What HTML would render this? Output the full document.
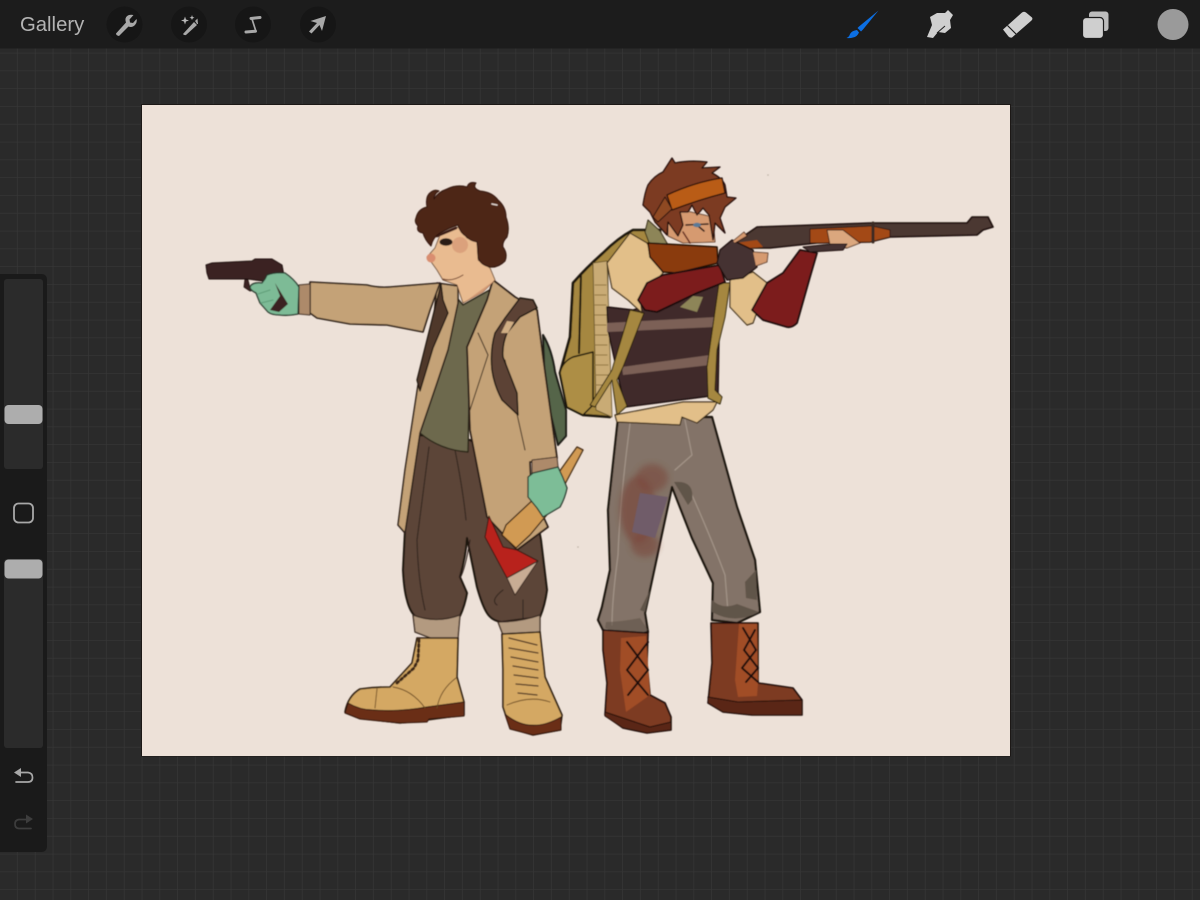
<!DOCTYPE html>
<html><head><meta charset="utf-8"><style>
html,body{margin:0;padding:0;background:#2a2a2a}
#s{position:relative;width:1200px;height:900px;overflow:hidden;font-family:"Liberation Sans",sans-serif}
svg{position:absolute;left:0;top:0}
#g{position:absolute;left:20px;top:13px;font-size:20.300px;line-height:24px;color:#b4b4b4}
</style></head><body><div id="s">
<svg width="1200" height="900" viewBox="0 0 1200 900" xmlns="http://www.w3.org/2000/svg">
<defs>
<pattern id="gr" x="0" y="0" width="17.8" height="17.8" patternUnits="userSpaceOnUse"><path d="M17.8 0V17.8M0 17.8H17.8" stroke="#373737" stroke-width="1.3" fill="none"/></pattern>
<filter id="soft" x="-5%" y="-5%" width="110%" height="110%"><feGaussianBlur stdDeviation="0.5"/></filter>
<filter id="bl" x="-50%" y="-50%" width="200%" height="200%"><feGaussianBlur stdDeviation="3"/></filter>
</defs>
<rect width="1200" height="900" fill="#2a2a2a"/>
<rect width="1200" height="900" fill="url(#gr)"/>
<rect x="141" y="104" width="870" height="652.5" fill="#1c1816"/>
<rect x="142" y="105" width="868" height="651" fill="#ede1d8"/>

<g filter="url(#soft)" stroke-linejoin="round" stroke-linecap="round">
<!-- LEFT CHARACTER -->
<path d="M543 335Q552 350 555 372L566 410L566 436L558 445L545 390Z" fill="#54654a" stroke="#1d1a16" stroke-width="2"/>
<!-- pants -->
<path d="M418 435Q410 480 405 530L403 570Q404 590 407 600Q410 612 416 617Q437 624 460 616Q465 605 467 593L460 577Q466 555 467 538L477 587Q482 605 487 613Q492 621 502 622L540 617Q545 605 547 590L541 540L530 480L470 440Z" fill="#5c4539" stroke="#1f1410" stroke-width="2"/>
<path d="M429 447Q422 500 417 540Q418 580 425 610M455 450Q463 490 466 520M470 540Q465 570 460 578M503 590Q490 600 497 605M523 600V618" fill="none" stroke="#2e211b" stroke-width="1"/>
<path d="M413 615Q436 624 460 615L458 638L433 639L415 632Z" fill="#b39a80" stroke="#3a2a20" stroke-width="1.3"/>
<path d="M498 622Q520 622 540 615L540 632L503 635Z" fill="#b39a80" stroke="#3a2a20" stroke-width="1.3"/>
<!-- left boot -->
<path d="M417 638L458 638L457 677L464 702L464 715L427 720L400 723L360 718L345 712Q348 696 360 689Q375 687 390 687L412 663Z" fill="#d4a864" stroke="#2a1a10" stroke-width="1.6"/>
<path d="M348 703Q360 710 373 710Q400 712 427 707L464 702L464 716L429 719L427 722L400 723L360 719L345 713Z" fill="#6a2d12" stroke="#2a1208" stroke-width="1"/>
<path d="M377 689L375 708M393 687Q412 690 425 708M437 708Q440 690 456 678" fill="none" stroke="#6b4a22" stroke-width=".9"/>
<path d="M397 683L414 668L418 660L419 640" fill="none" stroke="#3d2617" stroke-width="3" stroke-dasharray="2 3"/>
<!-- right boot -->
<path d="M502 634L540 632L545 677L562 715L560 730L533 735L510 728L503 707L503 670Z" fill="#d4a864" stroke="#2a1a10" stroke-width="1.6"/>
<path d="M505 714Q530 735 561 717L561 730L533 735L510 729Z" fill="#6a2d12" stroke="#2a1208" stroke-width="1"/>
<path d="M509 638L537 645M509 648L538 653M511 657L538 662M513 666L538 670M514 675L538 678M516 684L538 686M518 693L537 695" stroke="#4a3020" stroke-width="1.3" fill="none"/>
<path d="M507 705Q530 695 550 702" fill="none" stroke="#6b4a22" stroke-width=".9"/>
<!-- shirt -->
<path d="M457 298L463 305L495 287L470 345L468 452Q440 450 420 433L437 383L448 350Z" fill="#6d694e" stroke="#2b2519" stroke-width="1.4"/>
<!-- jacket left -->
<path d="M437 283L458 286L458 303L448 350L437 383L420 433L405 533L398 525L405 470L418 385L432 340Z" fill="#c4a277" stroke="#2b1f16" stroke-width="1.5"/>
<path d="M441 284L417 380L420 391L433 348L448 313L443 300Z" fill="#4f382c" stroke="#1f1510" stroke-width="1.3"/>
<!-- jacket right -->
<path d="M493 280L515 297L537 310L543 357L557 458L530 462L531 490L548 527L517 550L502 533L487 517L470 430L467 347L487 300Z" fill="#c4a277" stroke="#2b1f16" stroke-width="1.8"/>
<path d="M478 333L488 355L470 410M505 360L525 450" fill="none" stroke="#3a2a1c" stroke-width="1"/>
<!-- strap -->
<path d="M505 318L520 298L533 300L537 308L520 317L507 333Q502 345 503 357L517 393L518 415L502 400Q494 385 492 370Q490 350 495 333Z" fill="#5b4236" stroke="#1f1510" stroke-width="1.4"/>
<path d="M501 333L507 321L514 322L508 333Z" fill="#d0ae84"/>
<!-- sleeve -->
<path d="M310 282L367 285Q378 288 390 287L440 283L430 310L423 332L387 325L350 324L317 318L310 313Z" fill="#c4a277" stroke="#2b1f16" stroke-width="1.6"/>
<path d="M299 285L310 284L310 315L299 314Z" fill="#ad8a6b" stroke="#3a2a20" stroke-width="1"/>
<!-- gun -->
<path d="M206 265L212 263L252 261L255 259L272 259L282 265L284 276L270 282L248 279L209 279L207 273Z" fill="#3a2320" stroke="#1b100d" stroke-width="1"/>
<path d="M245 279L244 287L250 291L262 289L262 284L250 288L248 280Z" fill="#3a2320" stroke="#1b100d" stroke-width=".8"/>
<!-- hand -->
<path d="M267 275Q275 272 285 273Q294 279 299 287L298 314Q288 316 280 315Q272 315 268 312L260 303L256 293Q250 290 250 287Q252 282 262 283Q264 280 265 279Z" fill="#7dbb96" stroke="#27342a" stroke-width="1.3"/>
<path d="M275 283L288 304L279 312L270 310L280 296Z" fill="#3a2320"/>
<path d="M258 294L270 290M261 303L273 300" stroke="#5f9c78" stroke-width="1" fill="none"/>
<!-- face -->
<path d="M440 235L458 227L467 238L477 242L478 260L490 268L495 280L483 292L463 303L457 285L443 280L437 270L432 263L427 257L435 248Z" fill="#e9bb90" stroke="#5a3a25" stroke-width=".8"/>
<ellipse cx="460" cy="245" rx="8" ry="8" fill="#cf8d6b" opacity=".55"/>
<ellipse cx="431" cy="258" rx="4.500" ry="4.500" fill="#d98d6f"/>
<ellipse cx="446" cy="242" rx="6.500" ry="3.800" fill="#2c1a14"/>
<path d="M437 236L456 228" stroke="#3d1f14" stroke-width="2.6" fill="none"/>
<path d="M443 279Q452 282 463 275" fill="none" stroke="#6d3f2a" stroke-width="1"/>
<path d="M463 303L495 280L483 292Z" fill="#d39a74"/>
<path d="M478 262L470 258Q474 248 476 243Z" fill="#e9bb90"/>
<!-- hair -->
<path d="M416 218Q418 209 427 207Q425 196 431 192Q435 189 439 191Q434 194 434 199Q438 192 447 189Q457 184 467 187Q469 181 476 183Q472 188 480 191Q492 192 498 200Q506 207 506 217Q510 228 507 237Q502 242 503 247Q508 254 505 261Q498 268 490 267Q480 265 478 257Q478 248 477 242Q470 241 467 237Q460 233 458 225Q449 228 440 233Q433 237 431 246Q425 240 423 233Q416 232 418 226Q414 222 416 218Z" fill="#4d2518" stroke="#2d1209" stroke-width="1"/>
<path d="M492 204L497 205" stroke="#eee2da" stroke-width="1.400"/>
<!-- hand 2 + axe -->
<path d="M583 450L577 447L552 482L506 525L502 535L516 548L530 535L555 505L566 482Z" fill="#d19a52" stroke="#3a2410" stroke-width="1.300"/>
<path d="M489 516L503 547L517 550L538 561L507 578L485 537Z" fill="#b8241f" stroke="#3b1510" stroke-width="1"/>
<path d="M538 561L507 578L515 595Z" fill="#c8ac94" stroke="#3b2a20" stroke-width="1"/>
<path d="M532 460L557 457L558 467L532 475Z" fill="#ad8a6b" stroke="#3a2a20" stroke-width="1"/>
<path d="M528 477L533 473L558 467Q563 477 567 488Q565 498 560 507L543 517L537 508L528 497Z" fill="#7dbd97" stroke="#27342a" stroke-width="1.300"/>

<!-- RIGHT CHARACTER -->
<path d="M570 337L573 283Q586 268 603 253Q618 238 633 230L660 230L660 243L607 263L607 317L610 417L583 415L567 407L560 373Z" fill="#a5873f" stroke="#1a1408" stroke-width="2.600"/>
<path d="M560 373Q562 362 573 357L593 352L593 405L583 415L567 407Z" fill="#ad8e44" stroke="#1a1408" stroke-width="1.500"/>
<path d="M593 263L607 261L612 417L596 410Z" fill="#c9ab74" stroke="#5c4a22" stroke-width=".8"/>
<path d="M595 285H606M595 295H606M595 305H606M595 315H606M595 325H606M595 335H607M595 345H607M595 355H607M595 365H608M595 375H608M595 385H608" stroke="#8f7440" stroke-width="1"/>
<path d="M581 275L579 353" stroke="#1a1408" stroke-width="2" fill="none"/>
<!-- pants -->
<path d="M618 418L608 510L610 570L602 607L598 620L603 630L627 637L648 632L645 613L657 557L672 487L692 538L713 583L712 620L737 623L760 612L755 560L737 507L712 417Z" fill="#837367" stroke="#1a1410" stroke-width="2.200"/>
<path d="M630 424Q620 500 618 555Q612 600 612 625M692 495Q712 540 725 575L728 612M685 420L692 455L675 470" fill="none" stroke="#a39488" stroke-width="1.200"/>
<path d="M674 482Q695 480 692 500L688 505Z" fill="#61544a"/>
<path d="M712 612Q735 625 759 612L737 604Q722 610 712 600Z" fill="#61544a"/>
<path d="M745 582L756 570L757 600L746 598Z" fill="#61544a"/>
<path d="M605 628Q630 640 648 630L640 618Q620 622 606 622Z" fill="#61544a" opacity=".6"/>
<path d="M640 610L650 590L645 612Z" fill="#61544a"/>
<ellipse cx="638" cy="510" rx="18" ry="34" fill="#7a4a3c" opacity=".7" filter="url(#bl)"/>
<ellipse cx="652" cy="478" rx="16" ry="14" fill="#7a4a3c" opacity=".6" filter="url(#bl)"/>
<ellipse cx="645" cy="545" rx="14" ry="12" fill="#7a4a3c" opacity=".6" filter="url(#bl)"/>
<path d="M640 493L668 497L655 538L632 532Z" fill="#6f5b69"/>
<!-- boots -->
<path d="M711 623L758 623L758 683L793 688L802 700L802 715L752 715L723 712L708 703L712 663Z" fill="#7d3a20" stroke="#1f0f08" stroke-width="1.600"/>
<path d="M739 624L757 624L758 683L757 696L738 697L735 680Z" fill="#a14d26"/>
<path d="M708 697L738 702L802 700V715L752 715L723 712L708 703Z" fill="#5a2712" stroke="#1f0f08" stroke-width="1"/>
<path d="M743 628L756 650L742 668L758 682M755 630L744 650L758 668L746 682" fill="none" stroke="#1a0f0c" stroke-width="2"/>
<path d="M603 630L648 633L647 663L650 695L665 703L671 717L671 730L647 733L623 728L605 715L607 683L603 650Z" fill="#7d3a20" stroke="#1f0f08" stroke-width="1.600"/>
<path d="M621 638L646 636L650 695L626 712L620 670Z" fill="#a14d26"/>
<path d="M605 712L623 718L650 727L671 722V730L647 733L623 728L605 716Z" fill="#5a2712" stroke="#1f0f08" stroke-width="1"/>
<path d="M627 642L648 670L628 695M648 642L627 670L648 695" fill="none" stroke="#1a0f0c" stroke-width="2"/>
<!-- shirt tail -->
<path d="M615 415L683 402L717 402L713 410L697 423L682 417L680 425L617 422Z" fill="#e2bf89" stroke="#3a2a14" stroke-width="1.200"/>
<!-- vest -->
<path d="M607 307L633 310L720 280L718 395L625 407L608 330Z" fill="#41292a" stroke="#1a1010" stroke-width="1.400"/>
<path d="M607 323L717 317L715 327L607 332Z" fill="#7c6156"/>
<path d="M622 367L710 355L710 365L623 375Z" fill="#7c6156"/>
<path d="M630 310L644 313L623 367L617 380L627 406L617 415L612 380L595 407L590 405L612 370Z" fill="#a5873f" stroke="#2a200c" stroke-width="1"/>
<path d="M719 283L730 283L725 317L717 350L715 390L722 397L720 404L708 398L707 367Z" fill="#a5873f" stroke="#2a200c" stroke-width="1"/>
<!-- shirt -->
<path d="M607 263L630 233L647 243L663 273L640 297L642 313L628 300L612 288Z" fill="#e2bf89" stroke="#3a2a14" stroke-width="1.200"/>
<path d="M730 280L753 272L767 283L753 323L747 325L730 307Z" fill="#e2bf89" stroke="#3a2a14" stroke-width="1.200"/>
<path d="M680 307L693 296L703 297L697 312Z" fill="#8d8558"/>
<path d="M680 275L720 265L706 265L680 270Z" fill="#8d8558"/>
<!-- arm -->
<path d="M800 250L817 253L810 277L797 323Q792 328 787 327L763 320L752 310L767 283L783 273Z" fill="#7b1f1d" stroke="#1c0c0a" stroke-width="1.800"/>
<path d="M648 220L660 231L668 245L650 245L645 232Z" fill="#8d8558" stroke="#2a200c" stroke-width="1"/>
<!-- face -->
<path d="M668 215L682 210L713 217L715 242L683 243L668 236Z" fill="#d69a70" stroke="#3a1a10" stroke-width=".8"/>
<path d="M686 225L708 224M698 226L704 231" stroke="#2c1712" stroke-width="1.600" fill="none"/>
<ellipse cx="697" cy="225" rx="4" ry="2.200" fill="#5a7a96"/>
<path d="M683 232L690 243" stroke="#63281a" stroke-width="1.500"/>
<!-- hair -->
<path d="M643 205Q645 192 648 185Q654 176 663 172L672 158L675 163Q690 160 707 162L702 168L720 167L712 173Q722 178 725 185L727 197L736 198L725 207L720 218L725 233L715 223L713 240L709 215L703 208L697 215L692 205L688 212L680 212L683 225L678 236L668 222L667 235L655 222L650 212Z" fill="#7c3a20" stroke="#22100a" stroke-width="1.300"/>
<!-- goggles -->
<path d="M667 195Q695 182 722 178L725 193Q698 200 672 210Z" fill="#b95c12" stroke="#22100a" stroke-width="1.300"/>
<path d="M653 217L665 197L672 209L658 222Z" fill="#8f4a24" stroke="#22100a" stroke-width="1"/>
<!-- stock -->
<path d="M648 243L717 247L718 263L677 273L663 272L650 257Z" fill="#8a3a10" stroke="#1c0c06" stroke-width="1.500"/>
<!-- rifle -->
<path d="M735 242L757 227L870 223L967 223L972 217L988 217L993 227L983 230L977 235L890 237L870 242L817 243L770 248L737 248Z" fill="#4b3730" stroke="#1c100c" stroke-width="1.600"/>
<path d="M810 229L872 226L890 230L890 237L870 242L817 243L810 243Z" fill="#a34a16" stroke="#1c100c" stroke-width=".8"/>
<path d="M873 223V242" stroke="#3b2a22" stroke-width="3"/>
<path d="M735 243L757 240L763 247L737 249Z" fill="#a34a16"/>
<!-- arm left -->
<path d="M638 300L647 283L663 275L720 265L725 282L697 293L657 312L645 310Z" fill="#7b1f1d" stroke="#1c0c0a" stroke-width="1.800"/>
<!-- gloves -->
<path d="M720 250L732 240L753 250L757 267L743 278L727 280L717 263Z" fill="#443230" stroke="#1a0e0c" stroke-width="1.300"/>
<path d="M733 241L744 232L747 236L735 243M753 252L768 253L767 262L756 266" fill="#d69a70" stroke="#3a1a10" stroke-width=".8"/>
<path d="M827 230L843 230L860 243L847 248L830 245Z" fill="#dba77e" stroke="#3a1a10" stroke-width=".9"/>
<path d="M803 247L832 244L847 244L843 250L810 252Z" fill="#443230" stroke="#1a0e0c" stroke-width="1"/>
<circle cx="768" cy="175" r=".8" fill="#bcb0a4"/>
<circle cx="578" cy="547" r=".8" fill="#bcb0a4"/>
</g>

<!-- top bar -->
<rect width="1200" height="48.500" fill="#1c1c1c"/>
<g fill="#161616"><circle cx="124.500" cy="24.500" r="18"/><circle cx="189" cy="24.500" r="18"/><circle cx="253" cy="24.500" r="18"/><circle cx="318" cy="24.500" r="18"/></g>
<path d="M116 33.500L126 22.500Q124 17 129 15Q131 14.500 133.500 15L129.500 19.500L130 22.500L133 23L136.500 19Q137.500 22 135 25Q132 28 128.500 26.500L119 36Q116 35.500 116 33.500Z" fill="#a8a8a8"/>
<path d="M183 34L194 22L197 25L186 35Q184 35.500 183 34Z" fill="#a8a8a8"/><path d="M195 21L197.500 18.500L198 24L197 24Z" fill="#a8a8a8"/>
<path d="M185 16.500L186 19.500L189 20.500L186 21.500L185 24.500L184 21.500L181 20.500L184 19.500Z" fill="#b8b8b8"/><path d="M192 15L192.700 17L194.500 17.700L192.700 18.400L192 20L191.300 18.400L189.500 17.700L191.300 17Z" fill="#b8b8b8"/>
<g fill="none" stroke="#a8a8a8" stroke-linecap="round"><path d="M251 18.500L260 17.500" stroke-width="3"/><path d="M246 32L255.500 31.200" stroke-width="3"/><path d="M252 19L255.500 30" stroke-width="1.700"/></g>
<path d="M326 16L322 31L319.500 25L311.500 33.500L309 31.500L317 23L310.500 21Z" fill="#a8a8a8"/>
<path d="M878.500 10.500L859 26.500L857.500 28L861 31.500L863 29.500Z" fill="#0c6fe3"/>
<path d="M857 30L859 32.500Q857 37 853 37.500Q850 38.500 846.500 38Q849.500 36.500 850 34Q852 30.500 857 30Z" fill="#0c6fe3"/>
<path d="M927 37L932 25L930 17L937 13L945 13L948 10L953 15L950 20L951 28L945 33L938 32L933 38Z" fill="#cfcfcf"/><path d="M937 33L945 26" stroke="#1c1c1c" stroke-width="1" fill="none"/>
<path d="M1003 29.500L1022 12.500Q1024 11 1026 12.500L1032 17.500Q1033 19 1031.500 20.500L1012 37.500Q1010 38 1008.500 36.500Z" fill="#cfcfcf"/><path d="M1007.500 25.500L1016 34" stroke="#1c1c1c" stroke-width="1.200"/>
<rect x="1089" y="11.500" width="19.500" height="19.500" rx="3" fill="#bdbdbd"/>
<rect x="1082.500" y="17.500" width="21" height="21" rx="3.500" fill="#cfcfcf" stroke="#1c1c1c" stroke-width="1.200"/>
<circle cx="1173" cy="24.500" r="15.500" fill="#9a9a9a"/>

<!-- sidebar -->
<path d="M0 274H41Q47 274 47 280V846Q47 852 41 852H0Z" fill="#1a1a1a"/>
<rect x="4" y="279" width="39" height="190" rx="3" fill="#2b2b2b"/>
<rect x="4" y="559" width="39" height="189" rx="3" fill="#2b2b2b"/>
<rect x="4.500" y="405" width="38" height="19" rx="4" fill="#adadad"/>
<rect x="4.500" y="559.500" width="38" height="19" rx="4" fill="#adadad"/>
<rect x="14" y="503.500" width="19" height="19" rx="4.500" fill="none" stroke="#a8a8a8" stroke-width="1.800"/>
<path d="M20 772.500H28Q32.500 773 32.500 777.500Q32.500 782 28 782H16" fill="none" stroke="#a8a8a8" stroke-width="1.700" stroke-linecap="round"/>
<path d="M14 772.500L21 768V777Z" fill="#a8a8a8"/>
<path d="M26 819.500H19Q15 820 15 824Q15 828.500 19 828.500H31" fill="none" stroke="#3d3d3d" stroke-width="1.700" stroke-linecap="round"/>
<path d="M33 819L26 814.500V823.500Z" fill="#3d3d3d"/>
</svg>
<div id="g">Gallery</div>
</div></body></html>
